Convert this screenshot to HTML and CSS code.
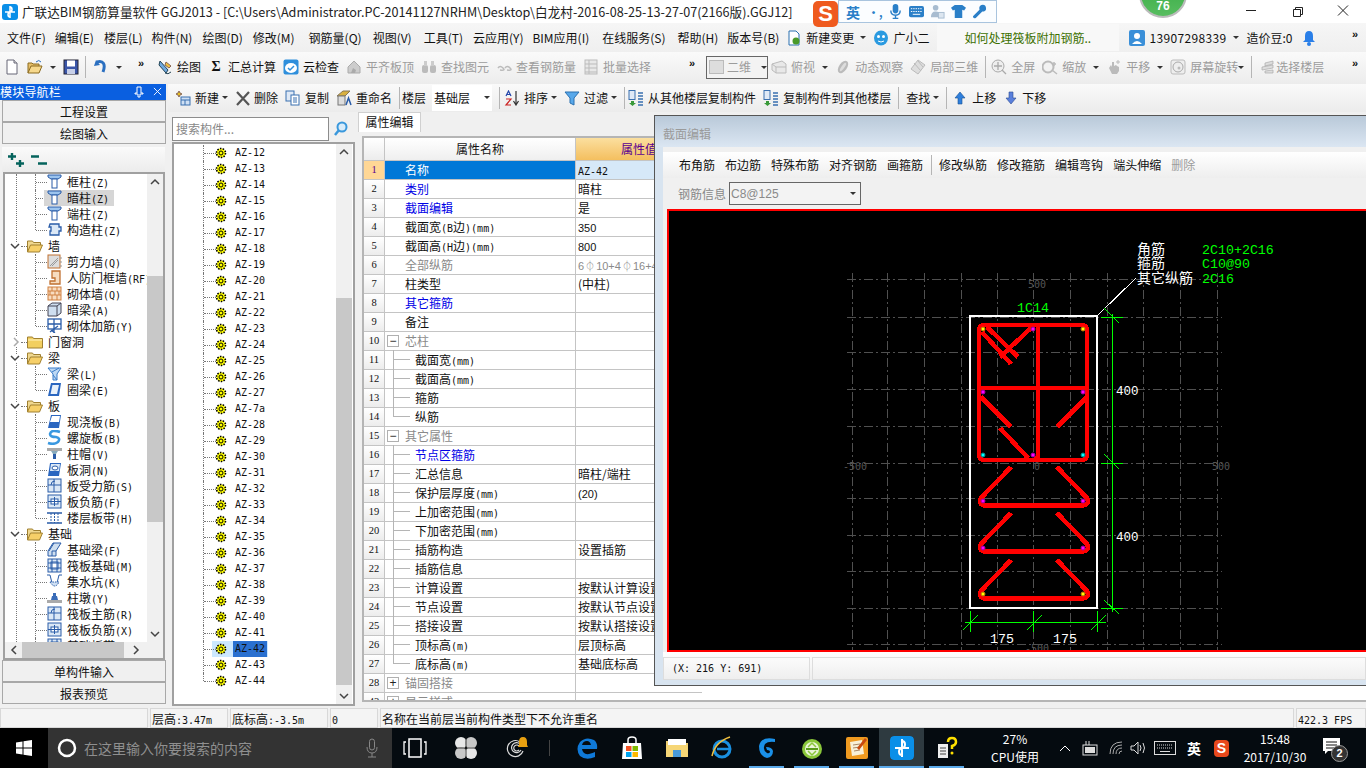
FILE: index.html
```html
<!DOCTYPE html>
<html lang="zh-CN">
<head>
<meta charset="utf-8">
<title>广联达BIM钢筋算量软件 GGJ2013</title>
<link rel="stylesheet" href="styles.css">
</head>
<body>
<svg class="defs" width="0" height="0">
<defs>
<symbol id="doc" viewBox="0 0 16 16"><path d="M3 1h7l3 3v11H3z" fill="#fff" stroke="#667"/><path d="M10 1v3h3" fill="#ddd" stroke="#667"/></symbol>
<symbol id="open" viewBox="0 0 16 16"><path d="M1 14V4h4l1 1h6v2" fill="#e7c06a" stroke="#8a6a20"/><path d="M1 14l3-7h11l-3 7z" fill="#f6d88c" stroke="#8a6a20"/><path d="M9 3q3-3 5 0" fill="none" stroke="#2a6fc0"/></symbol>
<symbol id="save" viewBox="0 0 16 16"><rect x="1" y="1" width="14" height="14" fill="#3a55a8" stroke="#223"/><rect x="4" y="1.500" width="8" height="6" fill="#fff"/><rect x="4" y="10" width="8" height="5" fill="#c8d0e8"/></symbol>
<symbol id="undo" viewBox="0 0 16 16"><path d="M4 3c6-2 9 2 6 10" fill="none" stroke="#2a6fc0" stroke-width="3"/><path d="M1 7l6-1-4-5z" fill="#2a6fc0"/></symbol>
<symbol id="draw" viewBox="0 0 16 16"><path d="M3 2l8 9-2 3-7-8z" fill="#6fa8e0" stroke="#245"/><path d="M9 3l5 4-2 2-4-3z" fill="#f0c040" stroke="#865"/><path d="M8 14q3 2 6-1" fill="none" stroke="#245"/></symbol>
<symbol id="cloud" viewBox="0 0 16 16"><rect x="0.500" y="0.500" width="15" height="15" rx="2" fill="#2f8fdc"/><ellipse cx="8" cy="9" rx="6" ry="5" fill="#fff"/><path d="M5 9l2 2 4-4" fill="none" stroke="#2f8fdc" stroke-width="1.500"/></symbol>
<symbol id="g1" viewBox="0 0 16 16"><path d="M2 14V8l6-6 6 6v6z" fill="#ccc" stroke="#aaa"/><path d="M5 14l2-5 3 2-1 3z" fill="#aaa"/></symbol>
<symbol id="g2" viewBox="0 0 16 16"><rect x="1" y="6" width="6" height="8" rx="2" fill="#bbb"/><rect x="9" y="6" width="6" height="8" rx="2" fill="#bbb"/><rect x="3" y="2" width="3" height="5" fill="#ccc"/><rect x="10" y="2" width="3" height="5" fill="#ccc"/></symbol>
<symbol id="g3" viewBox="0 0 16 16"><path d="M2 9q2-3 5 0t-3 2m5-2q2-3 5 0t-3 2" fill="none" stroke="#bbb" stroke-width="1.500"/></symbol>
<symbol id="g4" viewBox="0 0 16 16"><rect x="2" y="1" width="12" height="14" fill="#e8e8e8" stroke="#bbb"/><path d="M2 5h12M2 9h12M2 13h12M6 1v14" stroke="#bbb"/></symbol>
<symbol id="g5" viewBox="0 0 16 16"><path d="M1 5l10-3 4 3v9H5L1 11z" fill="#e8e8e8" stroke="#bbb"/><path d="M1 5l4 3h10M5 8v6" stroke="#bbb" fill="none"/></symbol>
<symbol id="g6" viewBox="0 0 16 16"><ellipse cx="8" cy="8" rx="4" ry="7" fill="#bbb" transform="rotate(35 8 8)"/><ellipse cx="8" cy="8" rx="1.500" ry="5" fill="#ddd" transform="rotate(35 8 8)"/></symbol>
<symbol id="g7" viewBox="0 0 16 16"><path d="M8 1l7 5-7 9-7-5z" fill="#ddd" stroke="#bbb"/><path d="M4 4l7 8M8 2l5 6" stroke="#bbb"/></symbol>
<symbol id="g8" viewBox="0 0 16 16"><circle cx="7" cy="7" r="6" fill="#eee" stroke="#aaa"/><path d="M7 3v8M3 7h8M11 11l4 4" stroke="#aaa" stroke-width="1.300"/></symbol>
<symbol id="g9" viewBox="0 0 16 16"><circle cx="6" cy="8" r="5.500" fill="#f2f2f2" stroke="#bbb" stroke-width="2"/><path d="M10 11l5 4M12 3v4M10 5h4" stroke="#bbb" stroke-width="1.500"/></symbol>
<symbol id="g10" viewBox="0 0 16 16"><path d="M3 9l2-3 1 2V3h2v4l2-1 1 1 2 1v4l-2 3H6z" fill="#bbb"/><path d="M12 1v4M10 3h4" stroke="#bbb"/></symbol>
<symbol id="g11" viewBox="0 0 16 16"><rect x="1" y="1" width="14" height="14" rx="2" fill="#eee" stroke="#bbb"/><circle cx="8" cy="8" r="5" fill="none" stroke="#aaa"/><circle cx="9" cy="9" r="1.500" fill="#bbb"/></symbol>
<symbol id="g12" viewBox="0 0 16 16"><path d="M6 4l8-2v3l-8 2zM3 8l11-2v3L3 11zM6 12l8-1v3H6z" fill="#ddd" stroke="#aaa" stroke-width=".7"/></symbol>
<symbol id="new" viewBox="0 0 16 16"><path d="M4 1l1 2 2 1-2 1-1 2-1-2-2-1 2-1z" fill="#e8c020" stroke="#865"/><rect x="6" y="7" width="9" height="8" fill="#cfe0f4" stroke="#3a70b0"/><path d="M6 10h9M10 10v5" stroke="#3a70b0"/></symbol>
<symbol id="del" viewBox="0 0 14 16"><path d="M1 2l12 13M13 2L1 15" stroke="#555" stroke-width="2.200"/></symbol>
<symbol id="copy" viewBox="0 0 16 16"><rect x="1" y="1" width="8" height="10" fill="#dfe9f6" stroke="#3a70b0"/><rect x="6" y="5" width="8" height="10" fill="#fff" stroke="#3a70b0"/><path d="M8 8h4M8 10h4M8 12h4" stroke="#3a70b0"/></symbol>
<symbol id="ren" viewBox="0 0 16 16"><path d="M1 6l6-5h7l-5 5z" fill="#d8b040" stroke="#875"/><rect x="2" y="6" width="7" height="9" fill="#ddd" stroke="#777"/><path d="M10 15l2.500-7 2.500 7" fill="none" stroke="#2a5ca8" stroke-width="1.500"/></symbol>
<symbol id="sort" viewBox="0 0 16 16"><path d="M2 6l2.500-5L7 6M2.800 4.500h3.400" fill="none" stroke="#24a" stroke-width="1.200"/><path d="M2 9h5l-5 6h5" fill="none" stroke="#c22" stroke-width="1.200"/><path d="M12 1v13M9.500 11l2.500 4 2.500-4" fill="none" stroke="#333" stroke-width="1.200"/></symbol>
<symbol id="filter" viewBox="0 0 16 16"><path d="M1 2h14l-5 6v7l-4-2V8z" fill="#58a8ea" stroke="#2a70b0"/></symbol>
<symbol id="cfrom" viewBox="0 0 16 16"><rect x="1" y="0.500" width="6" height="9" fill="#dfe9f6" stroke="#3a70b0"/><path d="M3 11h3v2h2l-3.500 3L1 13h2z" fill="#3a9a3a"/><path d="M10 3h5M10 6h5M10 9h5M10 12h5M10 15h5" stroke="#3a70b0" stroke-width="1.500"/></symbol>
<symbol id="up" viewBox="0 0 12 16"><path d="M6 2l5 6H8v6H4V8H1z" fill="#2f7fdc" stroke="#1a5090" stroke-width=".6"/></symbol>
<symbol id="down" viewBox="0 0 12 16"><path d="M6 14l5-6H8V2H4v6H1z" fill="#5a80dc" stroke="#2a4a90" stroke-width=".6"/></symbol>
<symbol id="search" viewBox="0 0 16 16"><circle cx="9" cy="6" r="4.500" fill="#d8ecfa" stroke="#3a98dc" stroke-width="2"/><path d="M6 9l-4 5" stroke="#3a98dc" stroke-width="2.500"/></symbol>
<symbol id="gear" viewBox="0 0 12 12"><circle cx="6" cy="6" r="4.500" fill="#ff0" stroke="#000" stroke-width="1.600" stroke-dasharray="1.500 1.300"/><circle cx="6" cy="6" r="2" fill="#ff0" stroke="#000"/></symbol>
<symbol id="fopen" viewBox="0 0 16 14"><path d="M0.500 13V2h5l1 1.500h7V6" fill="#f0d890" stroke="#a08030"/><path d="M0.500 13l3-7h12l-3 7z" fill="#f6cf68" stroke="#a08030"/></symbol>
<symbol id="fclosed" viewBox="0 0 16 14"><path d="M0.500 13V2h5l1 1.500h9V13z" fill="#f2cf60" stroke="#a08030"/><path d="M1 5h14" stroke="#fff3c0"/></symbol>
<symbol id="col" viewBox="0 0 15 15"><path d="M1 1h13v2l-3 2H4L1 3z" fill="#9cc4ee" stroke="#2a5ca8"/><rect x="5" y="5" width="5" height="9" fill="#fff" stroke="#2a5ca8"/></symbol>
<symbol id="gz" viewBox="0 0 15 15"><path d="M3 2h9v3h2v4h-2v4H3V9h1V5H2z" fill="#dbe8f6" stroke="#2a5ca8" stroke-width="1.300"/></symbol>
<symbol id="shear" viewBox="0 0 15 15"><rect x="1" y="1" width="12" height="13" fill="#ddd" stroke="#c07030"/><path d="M3 12l8-8M5 12l6-6M13 4h2M13 8h2M13 12h2" stroke="#999"/></symbol>
<symbol id="rf" viewBox="0 0 15 15"><path d="M5 1h8v13H3v-3h5V8H5z" fill="#f6dcc0" stroke="#c07030" stroke-width="1.300"/></symbol>
<symbol id="brick" viewBox="0 0 15 15"><rect x="1" y="1" width="13" height="13" fill="#f8dcc0" stroke="#d08040"/><path d="M1 5h13M1 9h13M5 1v4M10 1v4M3 5v4M8 5v4M12 5v4M5 9v5M10 9v5" stroke="#d08040"/></symbol>
<symbol id="beam" viewBox="0 0 15 15"><path d="M1 4l4-3h9v10l-4 3H1z" fill="#cfdff0" stroke="#445"/><path d="M1 4h9v10M10 4l4-3" fill="none" stroke="#445"/></symbol>
<symbol id="rein" viewBox="0 0 15 15"><rect x="1" y="1" width="13" height="10" fill="#fff" stroke="#2a5ca8" stroke-width="1.300"/><path d="M7 1v14M1 6h13M3 14l8-6M4 12l4 3" stroke="#2a5ca8" stroke-width="1.300" fill="none"/></symbol>
<symbol id="liang" viewBox="0 0 15 15"><path d="M1 2h13L10 8v6H6V8z" fill="#bcd8f4" stroke="#3a7cc8"/><path d="M5 6l7-4M6 9l4 5" stroke="#3a7cc8"/></symbol>
<symbol id="ring" viewBox="0 0 15 15"><path d="M4 1h10l-2 13H1z" fill="#2a66c0"/><path d="M5.500 3h6.500L10 12H3.500z" fill="#e8f1fb"/></symbol>
<symbol id="slab" viewBox="0 0 15 15"><path d="M4 1h10l-2 13H1z" fill="#2a66c0"/><path d="M5 2h8l-1 6H3z" fill="#fff"/></symbol>
<symbol id="spiral" viewBox="0 0 15 15"><path d="M13 2Q4-1 3 4q0 3 6 3 5 1 2 5-4 3-10 1" fill="none" stroke="#3a98e0" stroke-width="2.600"/></symbol>
<symbol id="cap" viewBox="0 0 15 15"><path d="M0 2h15v3H0z" fill="#aaa"/><path d="M4 5h7l-2 3H6z" fill="#8ab"/><rect x="6" y="8" width="3" height="5" fill="#2a5ca8"/></symbol>
<symbol id="hole" viewBox="0 0 15 15"><path d="M3 1h11l-2 13H1z" fill="#2a66c0"/><path d="M4 2h9l-1 7H3z" fill="#dbe8f6"/><ellipse cx="8" cy="6" rx="3" ry="2" fill="#fff" stroke="#2a5ca8"/></symbol>
<symbol id="reb" viewBox="0 0 15 15"><rect x="1" y="1" width="13" height="13" fill="#dbe8f6" stroke="#2a5ca8"/><path d="M1 7h13M7 1v13" stroke="#2a5ca8"/><path d="M4 7q0-4 4-4" fill="none" stroke="#2a5ca8"/></symbol>
<symbol id="neg" viewBox="0 0 15 15"><rect x="1" y="1" width="13" height="13" fill="#dbe8f6" stroke="#2a5ca8"/><rect x="4" y="5" width="7" height="5" fill="#fff" stroke="#2a5ca8"/><path d="M7.500 3v9M1 7.500h13" stroke="#2a5ca8"/></symbol>
<symbol id="band" viewBox="0 0 15 15"><path d="M0 3h15M0 13h15" stroke="#2a5ca8" stroke-width="1.300"/><path d="M4 3v10M7.500 3v10M11 3v10" stroke="#2a5ca8" stroke-dasharray="2 1"/></symbol>
<symbol id="jl" viewBox="0 0 15 15"><path d="M1 14V9l5-8h8L9 9v5z" fill="#cfdff0" stroke="#2a5ca8"/><path d="M5 14V9h4M2 9l5-8" fill="none" stroke="#2a5ca8"/></symbol>
<symbol id="fb" viewBox="0 0 15 15"><rect x="1" y="1" width="13" height="13" fill="#dbe8f6" stroke="#2a5ca8"/><rect x="4" y="4" width="7" height="7" fill="#fff" stroke="#2a5ca8"/><path d="M1 5h13M1 10h13M5 1v13M10 1v13" stroke="#2a5ca8"/></symbol>
<symbol id="pit" viewBox="0 0 15 15"><path d="M0 1h3l2 8h5l2-8h3" fill="none" stroke="#2a5ca8"/><path d="M3 8q5 8 9 0z" fill="#cfe0f4" stroke="#2a5ca8" stroke-dasharray="1.500 1"/></symbol>
<symbol id="pier" viewBox="0 0 15 15"><path d="M5 6h5l1 4H4z" fill="#3a6cb8"/><rect x="6" y="3" width="3" height="3" fill="#3a6cb8"/><rect x="0" y="10" width="15" height="3" fill="#aaa"/></symbol>
<symbol id="chev-d" viewBox="0 0 10 8"><path d="M1 2l4 4 4-4" fill="none" stroke="#444" stroke-width="1.500"/></symbol>
<symbol id="chev-u" viewBox="0 0 10 8"><path d="M1 6l4-4 4 4" fill="none" stroke="#444" stroke-width="1.500"/></symbol>
<symbol id="chev-r" viewBox="0 0 8 10"><path d="M2 1l4 4-4 4" fill="none" stroke="#aaa" stroke-width="1.500"/></symbol>
<symbol id="chev-r2" viewBox="0 0 8 10"><path d="M2 1l4 4-4 4" fill="none" stroke="#444" stroke-width="1.500"/></symbol>
<symbol id="chev-l" viewBox="0 0 8 10"><path d="M6 1L2 5l4 4" fill="none" stroke="#444" stroke-width="1.500"/></symbol>
</defs>
</svg>

<header class="titlebar">
  <svg class="appicon" viewBox="0 0 16 16"><rect width="16" height="16" rx="3" fill="#0a8fe8"/><path d="M8 2v12M3 8h4q3 0 3-2.500T8 3M13 8H9q-3 0-3 2.500T8 13" fill="none" stroke="#fff" stroke-width="1.500"/></svg>
  <span class="title-text">广联达BIM钢筋算量软件 GGJ2013 - [C:\Users\Administrator.PC-20141127NRHM\Desktop\白龙村-2016-08-25-13-27-07(2166版).GGJ12]</span>
  <div class="winbtns">
    <svg class="wb" viewBox="0 0 46 23"><path d="M18 10.500h10" stroke="#222"/></svg>
    <svg class="wb" viewBox="0 0 46 23"><path d="M19.500 9.500h7v7h-7zM21.500 9.500v-2h7v7h-2" fill="none" stroke="#222"/></svg>
    <svg class="wb" viewBox="0 0 46 23"><path d="M18 5.500l10 10M28 5.500l-10 10" stroke="#222"/></svg>
  </div>
</header>

<nav class="menubar">
  <span>文件(F)</span><span class="mm1">编辑(E)</span><span>楼层(L)</span><span class="mm1">构件(N)</span><span>绘图(D)</span><span>修改(M)</span><span class="mp4">钢筋量(Q)</span><span class="mp1">视图(V)</span><span class="mp2">工具(T)</span><span>云应用(Y)</span><span class="mm1">BIM应用(I)</span><span class="mp3">在线服务(S)</span><span class="mp2">帮助(H)</span><span class="mm1">版本号(B)</span>
  <svg class="mi16 mm3" viewBox="0 0 16 16"><path d="M3 1h7l3 3v11H3z" fill="#fff" stroke="#2a70b0"/><circle cx="10" cy="11" r="3.500" fill="#4a9a2a"/></svg>
  <span class="tight-l">新建变更</span><i class="caret mc"></i>
  <svg class="mi16 mm3" viewBox="0 0 16 16"><ellipse cx="8" cy="8" rx="7" ry="7.500" fill="#2a9ae0"/><circle cx="5.500" cy="6.500" r="1.500" fill="#fff"/><circle cx="10.500" cy="6.500" r="1.500" fill="#fff"/><path d="M5 11q3 2 6 0" fill="none" stroke="#fff"/></svg>
  <span class="tight-l">广小二</span>
  <div class="ask">如何处理筏板附加钢筋..</div>
  <svg class="mi16" viewBox="0 0 16 16"><rect width="16" height="16" rx="2" fill="#3a8fd8"/><circle cx="8" cy="6" r="3" fill="#fff"/><path d="M3 14q5-6 10 0z" fill="#fff"/></svg>
  <span class="tight-l phone">13907298339</span><i class="caret mc"></i>
  <span class="mm2">造价豆:0</span>
  <svg class="bell" viewBox="0 0 14 16"><path d="M7 1q4 0 4 5v4l2 2H1l2-2V6q0-5 4-5z" fill="#2a7fe8"/><circle cx="7" cy="14" r="2" fill="#2a7fe8"/></svg>
  <span class="more endmore">»</span>
</nav>

<div class="toolbar">
  <svg class="ic"><use href="#doc"/></svg>
  <svg class="ic"><use href="#open"/></svg><i class="caret"></i>
  <svg class="ic"><use href="#save"/></svg>
  <i class="sep tl"></i>
  <svg class="ic"><use href="#undo"/></svg><i class="caret"></i>
  <span class="more after-undo">»</span>
  <div class="t after-more"><svg class="ic"><use href="#draw"/></svg>绘图</div>
  <div class="t"><b class="sig">Σ</b>汇总计算</div>
  <div class="t"><svg class="ic"><use href="#cloud"/></svg>云检查</div>
  <div class="t off"><svg class="ic"><use href="#g1"/></svg>平齐板顶</div>
  <div class="t off"><svg class="ic"><use href="#g2"/></svg>查找图元</div>
  <div class="t off"><svg class="ic"><use href="#g3"/></svg>查看钢筋量</div>
  <div class="t off"><svg class="ic"><use href="#g4"/></svg>批量选择</div>
  <span class="more after-batch">»</span>
  <div class="combo2d off"><i class="sq"></i>二维<i class="caret cr"></i></div>
  <div class="t off pull"><svg class="ic"><use href="#g5"/></svg>俯视</div><i class="caret"></i>
  <div class="t off"><svg class="ic"><use href="#g6"/></svg>动态观察</div>
  <div class="t off"><svg class="ic"><use href="#g7"/></svg>局部三维</div>
  <i class="sep"></i>
  <div class="t off tl2"><svg class="ic"><use href="#g8"/></svg>全屏</div>
  <div class="t off"><svg class="ic"><use href="#g9"/></svg>缩放</div><i class="caret"></i>
  <div class="t off"><svg class="ic"><use href="#g10"/></svg>平移</div><i class="caret"></i>
  <div class="t off"><svg class="ic"><use href="#g11"/></svg>屏幕旋转</div><i class="caret tc"></i>
  <i class="sep"></i>
  <div class="t off nogap"><svg class="ic"><use href="#g12"/></svg>选择楼层</div>
  <span class="more endmore">»</span>
</div>

<main class="workspace">
  <aside class="nav">
    <div class="nav-head"><span>模块导航栏</span>
      <svg class="pin" viewBox="0 0 10 12"><path d="M3 1h4v6h2v1H6v3H4V8H1V7h2z" fill="none" stroke="#fff"/></svg>
      <svg class="xx" viewBox="0 0 10 10"><path d="M1 1l8 8M9 1l-8 8" stroke="#fff"/></svg>
    </div>
    <div class="nav-btn">工程设置</div>
    <div class="nav-btn">绘图输入</div>
    <div class="nav-tools">
      <svg class="pm" viewBox="0 0 20 16"><path d="M4 4.500h8M8 1v7M12 11.500h8M16 8v7" stroke="#05635c" stroke-width="2.400"/></svg>
      <svg class="pm" viewBox="0 0 20 16"><path d="M2 4.500h8M9 11.500h9" stroke="#05635c" stroke-width="2.400"/></svg>
    </div>
    <div class="nav-box">
      <div class="nav-upper">
        <div class="nav-list">
          <div class="ni"><svg class="i15"><use href="#col"/></svg>框柱<span class="m">(Z)</span></div>
          <div class="ni"><span class="selb"><svg class="i15"><use href="#col"/></svg>暗柱<span class="m">(Z)</span></span></div>
          <div class="ni"><svg class="i15"><use href="#col"/></svg>端柱<span class="m">(Z)</span></div>
          <div class="ni last"><svg class="i15"><use href="#gz"/></svg>构造柱<span class="m">(Z)</span></div>
          <div class="nf"><svg class="chev"><use href="#chev-d"/></svg><svg class="fold"><use href="#fopen"/></svg>墙</div>
          <div class="ni"><svg class="i15"><use href="#shear"/></svg>剪力墙<span class="m">(Q)</span></div>
          <div class="ni"><svg class="i15"><use href="#rf"/></svg>人防门框墙<span class="m">(RF)</span></div>
          <div class="ni"><svg class="i15"><use href="#brick"/></svg>砌体墙<span class="m">(Q)</span></div>
          <div class="ni"><svg class="i15"><use href="#beam"/></svg>暗梁<span class="m">(A)</span></div>
          <div class="ni last"><svg class="i15"><use href="#rein"/></svg>砌体加筋<span class="m">(Y)</span></div>
          <div class="nf"><svg class="chev-side"><use href="#chev-r"/></svg><svg class="fold"><use href="#fclosed"/></svg>门窗洞</div>
          <div class="nf"><svg class="chev"><use href="#chev-d"/></svg><svg class="fold"><use href="#fopen"/></svg>梁</div>
          <div class="ni"><svg class="i15"><use href="#liang"/></svg>梁<span class="m">(L)</span></div>
          <div class="ni last"><svg class="i15"><use href="#ring"/></svg>圈梁<span class="m">(E)</span></div>
          <div class="nf"><svg class="chev"><use href="#chev-d"/></svg><svg class="fold"><use href="#fopen"/></svg>板</div>
          <div class="ni"><svg class="i15"><use href="#slab"/></svg>现浇板<span class="m">(B)</span></div>
          <div class="ni"><svg class="i15"><use href="#spiral"/></svg>螺旋板<span class="m">(B)</span></div>
          <div class="ni"><svg class="i15"><use href="#cap"/></svg>柱帽<span class="m">(V)</span></div>
          <div class="ni"><svg class="i15"><use href="#hole"/></svg>板洞<span class="m">(N)</span></div>
          <div class="ni"><svg class="i15"><use href="#reb"/></svg>板受力筋<span class="m">(S)</span></div>
          <div class="ni"><svg class="i15"><use href="#neg"/></svg>板负筋<span class="m">(F)</span></div>
          <div class="ni last"><svg class="i15"><use href="#band"/></svg>楼层板带<span class="m">(H)</span></div>
          <div class="nf"><svg class="chev"><use href="#chev-d"/></svg><svg class="fold"><use href="#fopen"/></svg>基础</div>
          <div class="ni"><svg class="i15"><use href="#jl"/></svg>基础梁<span class="m">(F)</span></div>
          <div class="ni"><svg class="i15"><use href="#fb"/></svg>筏板基础<span class="m">(M)</span></div>
          <div class="ni"><svg class="i15"><use href="#pit"/></svg>集水坑<span class="m">(K)</span></div>
          <div class="ni"><svg class="i15"><use href="#pier"/></svg>柱墩<span class="m">(Y)</span></div>
          <div class="ni"><svg class="i15"><use href="#reb"/></svg>筏板主筋<span class="m">(R)</span></div>
          <div class="ni"><svg class="i15"><use href="#neg"/></svg>筏板负筋<span class="m">(X)</span></div>
          <div class="ni"><svg class="i15"><use href="#fb"/></svg>基础板带<span class="m">(H)</span></div>
        </div>
        <div class="vbar nav-v">
          <svg class="arr"><use href="#chev-u"/></svg>
          <div class="thumb"></div>
          <svg class="arr arr-end"><use href="#chev-d"/></svg>
        </div>
      </div>
      <div class="hbar">
        <svg class="harr"><use href="#chev-l"/></svg>
        <div class="hthumb"></div>
        <svg class="harr harr-end"><use href="#chev-r2"/></svg>
      </div>
    </div>
    <div class="nav-btn">单构件输入</div>
    <div class="nav-btn">报表预览</div>
  </aside>

  <section class="right">
    <div class="toolbar2">
      <div class="t"><svg class="ic"><use href="#new"/></svg>新建</div><i class="caret c2"></i>
      <div class="t x8"><svg class="ic14"><use href="#del"/></svg>删除</div>
      <div class="t"><svg class="ic"><use href="#copy"/></svg>复制</div>
      <div class="t"><svg class="ic"><use href="#ren"/></svg>重命名</div>
      <i class="sep"></i>
      <span class="lab">楼层</span>
      <div class="floor">基础层<i class="caret"></i></div>
      <i class="sep"></i>
      <div class="t lab2"><svg class="ic"><use href="#sort"/></svg>排序</div><i class="caret c2"></i>
      <div class="t"><svg class="ic"><use href="#filter"/></svg>过滤</div><i class="caret c2"></i>
      <i class="sep"></i>
      <div class="t lab1"><svg class="ic"><use href="#cfrom"/></svg>从其他楼层复制构件</div>
      <div class="t"><svg class="ic"><use href="#cfrom"/></svg>复制构件到其他楼层</div>
      <i class="sep"></i>
      <span>查找</span><i class="caret c2"></i>
      <i class="sep"></i>
      <div class="t g6"><svg class="ic12"><use href="#up"/></svg>上移</div>
      <div class="t g5 x3"><svg class="ic12"><use href="#down"/></svg>下移</div>
    </div>
    <div class="panes">
      <div class="tree-pane">
        <div class="search-row">
          <div class="search-input">搜索构件...</div>
          <svg class="search-ic"><use href="#search"/></svg>
        </div>
        <div class="tree-box">
          <div class="tree-list">
            <div class="tr"><svg class="gear"><use href="#gear"/></svg>AZ-12</div>
            <div class="tr"><svg class="gear"><use href="#gear"/></svg>AZ-13</div>
            <div class="tr"><svg class="gear"><use href="#gear"/></svg>AZ-14</div>
            <div class="tr"><svg class="gear"><use href="#gear"/></svg>AZ-15</div>
            <div class="tr"><svg class="gear"><use href="#gear"/></svg>AZ-16</div>
            <div class="tr"><svg class="gear"><use href="#gear"/></svg>AZ-17</div>
            <div class="tr"><svg class="gear"><use href="#gear"/></svg>AZ-18</div>
            <div class="tr"><svg class="gear"><use href="#gear"/></svg>AZ-19</div>
            <div class="tr"><svg class="gear"><use href="#gear"/></svg>AZ-20</div>
            <div class="tr"><svg class="gear"><use href="#gear"/></svg>AZ-21</div>
            <div class="tr"><svg class="gear"><use href="#gear"/></svg>AZ-22</div>
            <div class="tr"><svg class="gear"><use href="#gear"/></svg>AZ-23</div>
            <div class="tr"><svg class="gear"><use href="#gear"/></svg>AZ-24</div>
            <div class="tr"><svg class="gear"><use href="#gear"/></svg>AZ-25</div>
            <div class="tr"><svg class="gear"><use href="#gear"/></svg>AZ-26</div>
            <div class="tr"><svg class="gear"><use href="#gear"/></svg>AZ-27</div>
            <div class="tr"><svg class="gear"><use href="#gear"/></svg>AZ-7a</div>
            <div class="tr"><svg class="gear"><use href="#gear"/></svg>AZ-28</div>
            <div class="tr"><svg class="gear"><use href="#gear"/></svg>AZ-29</div>
            <div class="tr"><svg class="gear"><use href="#gear"/></svg>AZ-30</div>
            <div class="tr"><svg class="gear"><use href="#gear"/></svg>AZ-31</div>
            <div class="tr"><svg class="gear"><use href="#gear"/></svg>AZ-32</div>
            <div class="tr"><svg class="gear"><use href="#gear"/></svg>AZ-33</div>
            <div class="tr"><svg class="gear"><use href="#gear"/></svg>AZ-34</div>
            <div class="tr"><svg class="gear"><use href="#gear"/></svg>AZ-35</div>
            <div class="tr"><svg class="gear"><use href="#gear"/></svg>AZ-36</div>
            <div class="tr"><svg class="gear"><use href="#gear"/></svg>AZ-37</div>
            <div class="tr"><svg class="gear"><use href="#gear"/></svg>AZ-38</div>
            <div class="tr"><svg class="gear"><use href="#gear"/></svg>AZ-39</div>
            <div class="tr"><svg class="gear"><use href="#gear"/></svg>AZ-40</div>
            <div class="tr"><svg class="gear"><use href="#gear"/></svg>AZ-41</div>
            <div class="tr cur"><svg class="gear"><use href="#gear"/></svg><span class="curtext">AZ-42</span></div>
            <div class="tr"><svg class="gear"><use href="#gear"/></svg>AZ-43</div>
            <div class="tr last"><svg class="gear"><use href="#gear"/></svg>AZ-44</div>
          </div>
          <div class="vbar tree-v">
            <svg class="arr"><use href="#chev-u"/></svg>
            <div class="thumb"></div>
            <svg class="arr arr-end"><use href="#chev-d"/></svg>
          </div>
        </div>
      </div>

      <div class="props-pane">
        <div class="tabbar"><div class="tab">属性编辑</div></div>
        <div class="grid">
          <div class="row head"><div class="num"></div><div class="nm">属性名称</div><div class="val">属性值</div></div>
          <div class="row sel"><div class="num">1</div><div class="nm">名称</div><div class="val"><span class="m">AZ-42</span></div></div>
          <div class="row"><div class="num">2</div><div class="nm blue">类别</div><div class="val">暗柱</div></div>
          <div class="row"><div class="num">3</div><div class="nm blue">截面编辑</div><div class="val">是</div></div>
          <div class="row"><div class="num">4</div><div class="nm">截面宽<span class="m">(B</span>边<span class="m">)(mm)</span></div><div class="val"><span class="n">350</span></div></div>
          <div class="row"><div class="num">5</div><div class="nm">截面高<span class="m">(H</span>边<span class="m">)(mm)</span></div><div class="val"><span class="n">800</span></div></div>
          <div class="row"><div class="num">6</div><div class="nm gray">全部纵筋</div><div class="val gray"><span class="n">6</span><span class="rebar">⏀</span><span class="n">10+4</span><span class="rebar">⏀</span><span class="n">16+4</span></div></div>
          <div class="row"><div class="num">7</div><div class="nm">柱类型</div><div class="val">(中柱)</div></div>
          <div class="row"><div class="num">8</div><div class="nm blue">其它箍筋</div><div class="val"></div></div>
          <div class="row"><div class="num">9</div><div class="nm">备注</div><div class="val"></div></div>
          <div class="row"><div class="num">10</div><div class="nm grp gray"><i class="bx">−</i>芯柱</div><div class="val"></div></div>
          <div class="row"><div class="num">11</div><div class="nm sub">截面宽<span class="m">(mm)</span></div><div class="val"></div></div>
          <div class="row"><div class="num">12</div><div class="nm sub">截面高<span class="m">(mm)</span></div><div class="val"></div></div>
          <div class="row"><div class="num">13</div><div class="nm sub">箍筋</div><div class="val"></div></div>
          <div class="row"><div class="num">14</div><div class="nm sub end">纵筋</div><div class="val"></div></div>
          <div class="row"><div class="num">15</div><div class="nm grp gray"><i class="bx">−</i>其它属性</div><div class="val"></div></div>
          <div class="row"><div class="num">16</div><div class="nm sub blue">节点区箍筋</div><div class="val"></div></div>
          <div class="row"><div class="num">17</div><div class="nm sub">汇总信息</div><div class="val">暗柱/端柱</div></div>
          <div class="row"><div class="num">18</div><div class="nm sub">保护层厚度<span class="m">(mm)</span></div><div class="val"><span class="n">(20)</span></div></div>
          <div class="row"><div class="num">19</div><div class="nm sub">上加密范围<span class="m">(mm)</span></div><div class="val"></div></div>
          <div class="row"><div class="num">20</div><div class="nm sub">下加密范围<span class="m">(mm)</span></div><div class="val"></div></div>
          <div class="row"><div class="num">21</div><div class="nm sub">插筋构造</div><div class="val">设置插筋</div></div>
          <div class="row"><div class="num">22</div><div class="nm sub">插筋信息</div><div class="val"></div></div>
          <div class="row"><div class="num">23</div><div class="nm sub">计算设置</div><div class="val">按默认计算设置</div></div>
          <div class="row"><div class="num">24</div><div class="nm sub">节点设置</div><div class="val">按默认节点设置</div></div>
          <div class="row"><div class="num">25</div><div class="nm sub">搭接设置</div><div class="val">按默认搭接设置</div></div>
          <div class="row"><div class="num">26</div><div class="nm sub">顶标高<span class="m">(m)</span></div><div class="val">层顶标高</div></div>
          <div class="row"><div class="num">27</div><div class="nm sub end">底标高<span class="m">(m)</span></div><div class="val">基础底标高</div></div>
          <div class="row"><div class="num">28</div><div class="nm grp gray"><i class="bx">+</i>锚固搭接</div><div class="val"></div></div>
          <div class="row"><div class="num">43</div><div class="nm grp gray"><i class="bx">+</i>显示样式</div><div class="val"></div></div>
        </div>
      </div>
    </div>
  </section>
</main>

<footer class="statusbar">
  <div class="sc s1"></div>
  <div class="sc s2">层高<span class="m">:3.47m</span></div>
  <div class="sc s3">底标高<span class="m">:-3.5m</span></div>
  <div class="sc s4"><span class="m">0</span></div>
  <div class="sc s5">名称在当前层当前构件类型下不允许重名</div>
  <div class="sc s6"><span class="m">422.3 FPS</span></div>
</footer>

<div class="taskbar">
  <div class="start"><svg class="winlogo" viewBox="0 0 16 16"><path d="M0 2.500l6.500-1v6H0zM7.500 1.300L16 0v7.500H7.500zM0 8.500h6.500v6l-6.500-1zM7.500 8.500H16V16l-8.500-1.300z" fill="#fff"/></svg></div>
  <div class="tsearch">
    <svg class="cortana" viewBox="0 0 20 20"><circle cx="10" cy="10" r="8" fill="none" stroke="#fff" stroke-width="2.500"/></svg>
    <span>在这里输入你要搜索的内容</span>
    <svg class="mic" viewBox="0 0 12 20"><rect x="3.500" y="1" width="5" height="11" rx="2.500" fill="none" stroke="#888"/><path d="M1 9q0 6 5 6t5-6M6 15v4M2 19h8" fill="none" stroke="#888"/></svg>
  </div>
  <div class="tk"><svg class="tki" viewBox="0 0 24 24"><rect x="6" y="3" width="12" height="18" fill="none" stroke="#fff" stroke-width="1.500"/><path d="M3 6H1v12h2M21 6h2v12h-2" fill="none" stroke="#fff" stroke-width="1.300"/></svg></div>
  <div class="tk tk6"><svg class="tki" viewBox="0 0 24 24"><circle cx="7" cy="7" r="6" fill="#e8e8e8"/><circle cx="17" cy="7" r="6" fill="#c8c8c8"/><circle cx="7" cy="17" r="6" fill="#c8c8c8"/><circle cx="17" cy="17" r="6" fill="#e8e8e8"/><path d="M12 1v22M1 12h22" stroke="#111" stroke-width=".8"/></svg></div>
  <div class="tk tk5"><svg class="tki" viewBox="0 0 24 24"><path d="M16 6a8 8 0 1 0 3 9M16 8a5 5 0 1 0 1 6M15 10a3 3 0 1 0 0 4" fill="none" stroke="#ddd" stroke-width="1.200"/><path d="M19 1q4 0 4 5v3l1 2H14l1-2V6q0-5 4-5z" fill="#e8a010"/></svg></div>
  <i class="tk-sep"></i>
  <div class="tk tk14"><svg class="tki" viewBox="0 0 24 24"><path d="M22 13H7q1 6 7 5 4-1 6-2v5q-9 4-15-1-5-7 0-14 6-6 14-2 4 3 3 9zM16 9q-1-4-4-4-4 0-5 4z" fill="#0f79d8"/></svg></div>
  <div class="tk"><svg class="tki" viewBox="0 0 24 24"><path d="M3 7h18l1 16H2z" fill="#fff"/><path d="M8 7V4q0-3 4-3t4 3v3" fill="none" stroke="#fff" stroke-width="1.500"/><rect x="6" y="10" width="5.500" height="5" fill="#f25022"/><rect x="12.500" y="10" width="5.500" height="5" fill="#7fba00"/><rect x="6" y="16" width="5.500" height="5" fill="#00a4ef"/><rect x="12.500" y="16" width="5.500" height="5" fill="#ffb900"/></svg></div>
  <div class="tk"><svg class="tki" viewBox="0 0 24 24"><path d="M1 5h8l2 2h12v14H1z" fill="#f0d070"/><path d="M3 3h18v6H3z" fill="#fff"/><path d="M1 9h22v12H1z" fill="#f6d676"/><rect x="8" y="14" width="8" height="7" fill="#4a9ad8"/></svg></div>
  <div class="tk"><svg class="tki" viewBox="0 0 24 24"><circle cx="12" cy="13" r="8" fill="none" stroke="#1a90e0" stroke-width="3"/><path d="M7 13h14" stroke="#1a90e0" stroke-width="2.500"/><path d="M2 20q3-14 18-19" fill="none" stroke="#f0c040" stroke-width="1.500"/></svg></div>
  <div class="tk run"><svg class="tki" viewBox="0 0 24 24"><path d="M20 3Q6 0 4 10q0 10 8 12 6-1 6-7-1-4-7-4l1 3q3 0 3 2-1 2-3 1-5-3-2-9 3-3 10-2z" fill="#1a90e8"/></svg></div>
  <div class="tk run"><svg class="tki" viewBox="0 0 24 24"><circle cx="12" cy="13" r="10" fill="#8ac63a"/><circle cx="12" cy="13" r="7" fill="#eaf4d8"/><path d="M6 13h12" stroke="#5a9a1a" stroke-width="2"/><path d="M8 11l4-4 4 4M8 15l4 4 4-4" fill="none" stroke="#8ac63a" stroke-width="1.500"/></svg></div>
  <div class="tk run"><svg class="tki" viewBox="0 0 24 24"><rect x="1" y="1" width="22" height="22" rx="2" fill="#ef9a20"/><path d="M5 6l12-2 2 14-12 2z" fill="#f8f0d8"/><path d="M8 9l7-1M8 12l7-1M9 15l6-1" stroke="#a86" /><path d="M20 2l2 2-8 10-2-2z" fill="#c84a10"/></svg></div>
  <div class="tk run active"><svg class="tki appbig" viewBox="0 0 24 24"><rect width="24" height="24" rx="4" fill="#0a8fe8"/><path d="M12 3v18M5 12h6q4 0 4-3.500T12 5M19 12h-6q-4 0-4 3.500t3 3.500" fill="none" stroke="#fff" stroke-width="2"/></svg></div>
  <div class="tk run"><svg class="tki" viewBox="0 0 24 24"><rect x="3" y="8" width="10" height="14" fill="#eee"/><path d="M5 12h6M5 15h6M5 18h6" stroke="#444"/><path d="M13 6q0-4 4-4t4 4q0 3-4 4v3" fill="none" stroke="#ffe000" stroke-width="2.500"/><circle cx="17" cy="17" r="1.500" fill="#ffe000"/></svg></div>
  <div class="cpu"><span>27%</span><span>CPU使用</span></div>
  <svg class="tray-up" viewBox="0 0 12 8"><path d="M1 7l5-5 5 5" fill="none" stroke="#fff"/></svg>
  <svg class="tray-bat" viewBox="0 0 18 16"><rect x="2" y="5" width="14" height="10" fill="none" stroke="#ddd"/><rect x="4" y="7" width="10" height="6" fill="#ddd"/><path d="M5 1v4M8 1v4" stroke="#ddd"/></svg>
  <svg class="tray-wifi" viewBox="0 0 14 14"><path d="M1 13q0-12 12-12M4 13q0-9 9-9M7 13q0-6 6-6M10 13q0-3 3-3" fill="none" stroke="#aaa"/></svg>
  <svg class="tray-vol" viewBox="0 0 16 14"><path d="M1 5h3l4-4v12L4 9H1z" fill="none" stroke="#ddd"/><path d="M10 4q2 3 0 6M13 2q3 5 0 10" fill="none" stroke="#ddd"/></svg>
  <svg class="tray-kbd" viewBox="0 0 22 14"><rect x="0.500" y="0.500" width="21" height="13" fill="none" stroke="#ddd"/><path d="M3 4h16M3 7h16" stroke="#ddd" stroke-dasharray="1 1"/><path d="M6 10.500h10" stroke="#ddd"/></svg>
  <span class="tray-cn">英</span>
  <span class="tray-s">S</span>
  <div class="clock"><span>15:48</span><span>2017/10/30</span></div>
  <div class="notif"><svg class="notif-ic" viewBox="0 0 17 17"><path d="M0 0h17v13H5l-3 3v-3H0z" fill="#fff"/><path d="M3 4h11M3 7h11M3 10h11" stroke="#111"/></svg><span class="badge">2</span></div>
</div>

<div class="sogou">
  <span class="s-logo">S</span>
  <div class="s-bar">
    <b class="s-cn">英</b>
    <b class="s-p">•,</b>
    <svg class="s-i" viewBox="0 0 14 16"><rect x="4" y="0" width="6" height="10" rx="3" fill="#2a7fc8"/><path d="M2 7q0 5 5 5t5-5M7 12v3M4 15.500h6" fill="none" stroke="#2a7fc8" stroke-width="1.500"/></svg>
    <svg class="s-i" viewBox="0 0 16 14"><rect x="0" y="1" width="16" height="12" rx="2" fill="#2a7fc8"/><path d="M2 4h12M2 7h12" stroke="#fff" stroke-dasharray="1.500 1"/><path d="M4 10h8" stroke="#fff"/></svg>
    <svg class="s-i" viewBox="0 0 16 16"><circle cx="6" cy="4" r="3" fill="#a8bcd0"/><path d="M1 14q0-6 5-6t4 6z" fill="#a8bcd0"/><rect x="9" y="9" width="6" height="6" fill="#dce6f0" stroke="#a8bcd0"/></svg>
    <svg class="s-i" viewBox="0 0 16 16"><path d="M4 1h8l4 3-2 3-2-1v9H4V6L2 7 0 4z" fill="#2a7fc8"/></svg>
    <svg class="s-i" viewBox="0 0 16 16"><path d="M10 1q5-1 5 4 0 3-4 3L4 15q-3 1-3-2l7-7q-1-4 2-5z" fill="#2a7fc8"/></svg>
  </div>
</div>

<div class="badge76">76</div>

<div class="dialog">
  <div class="dlg-title">截面编辑</div>
  <div class="dlg-body">
    <div class="dlg-bar1">
      <span>布角筋</span><span>布边筋</span><span>特殊布筋</span><span>对齐钢筋</span><span>画箍筋</span><i class="sep"></i><span>修改纵筋</span><span>修改箍筋</span><span>编辑弯钩</span><span>端头伸缩</span><span class="off">删除</span>
    </div>
    <div class="dlg-bar2">
      <span class="off-d">钢筋信息</span>
      <div class="rebarinfo">C8@125<i class="caret"></i></div>
    </div>
    <div class="canvas">
      <svg class="cad" viewBox="669 211 697 439">
        <g class="grid-l">
          <path d="M847 279H1222M847 317H1222M847 352H1222M847 389H1222M847 426H1222M847 463H1222M847 498H1222M847 535H1222M847 571H1222M847 608H1222M847 644H1222"/>
          <path d="M852 273V650M887 273V650M924 273V650M961 273V650M997 273V650M1033 273V650M1070 273V650M1107 273V650M1143 273V650M1180 273V650M1217 273V650"/>
        </g>
        <g class="cad-g">
          <text x="1028" y="288">500</text>
          <text x="843" y="470">-500</text>
          <text x="1212" y="470">500</text>
          <text x="1034" y="470">0</text>
          <text x="1025" y="652">-500</text>
        </g>
        <rect class="outline" x="970" y="316" width="127" height="292"/>
        <g class="hoop">
          <rect x="979" y="325" width="108" height="135" rx="5"/>
          <path d="M1033 325H1038V455Q1038 460 1033 460M981 388H1087"/>
          <path d="M982 332L1011 364M987 327L1018 357M1031 328L1000 357M981 397L1011 427M1000 428L1028 458M1087 397L1057 427"/>
          <path d="M1011 467L981 498Q978 505 985 505.500H1082Q1090 505 1087 498L1057 467"/>
          <path d="M1011 513L981 544Q978 551 985 551.500H1082Q1090 551 1087 544L1057 513"/>
          <path d="M1011 560L981 591Q978 598 985 598.500H1082Q1090 598 1087 591L1057 560"/>
        </g>
        <g class="dots">
          <circle class="dy" cx="983" cy="329" r="2"/><circle class="dm" cx="1033" cy="329" r="2"/><circle class="dy" cx="1083" cy="329" r="2"/>
          <circle class="dm" cx="983" cy="392" r="2"/><circle class="dm" cx="1083" cy="392" r="2"/>
          <circle class="dc" cx="983" cy="455" r="2"/><circle class="dm" cx="1033" cy="455" r="2"/><circle class="dc" cx="1083" cy="455" r="2"/>
          <circle class="dm" cx="983" cy="501" r="2"/><circle class="dm" cx="1083" cy="501" r="2"/>
          <circle class="dm" cx="983" cy="548" r="2"/><circle class="dm" cx="1083" cy="548" r="2"/>
          <circle class="dy" cx="983" cy="594" r="2"/><circle class="dy" cx="1083" cy="594" r="2"/>
        </g>
        <path class="lead" d="M1097 316L1136 278"/>
        <g class="cad-w">
          <text x="1137" y="254">角筋</text>
          <text x="1137" y="268">箍筋</text>
          <text x="1137" y="283">其它纵筋</text>
        </g>
        <g class="cad-lg">
          <text x="1202" y="254">2C10+2C16</text>
          <text x="1202" y="268">C10@90</text>
          <text x="1202" y="283">2C16</text>
          <text x="1017" y="312">1C14</text>
        </g>
        <g class="dim">
          <path d="M1112 314V612M1101 317H1123M1101 463H1123M1101 608H1123M1104 308L1119 323M1104 454L1119 469M1104 600L1119 614"/>
          <path d="M965 622H1106M970 611V632M1033 611V632M1097 611V632M963 630L978 615M1027 630L1042 615M1091 630L1106 615"/>
        </g>
        <g class="cad-t">
          <text class="t400" x="1116" y="395">400</text>
          <text class="t400" x="1116" y="541">400</text>
          <text x="990" y="643">175</text>
          <text x="1053" y="643">175</text>
        </g>
      </svg>
    </div>
    <div class="dlg-status">
      <div class="coord">(X: 216 Y: 691)</div>
      <div class="coord-rest"></div>
    </div>
  </div>
</div>
</body>
</html>
```

FILE: styles.css
```css
* { box-sizing: border-box; }
html, body { margin: 0; padding: 0; }
body {
  width: 1366px;
  height: 768px;
  overflow: hidden;
  position: relative;
  display: flex;
  flex-direction: column;
  background: #f0f0f0;
  color: #111;
  font: 12px/16px "Noto Sans CJK SC", "Liberation Sans", sans-serif;
}
.defs { position: absolute; }
i { font-style: normal; }
.m { font: 10px/16px "DejaVu Sans Mono", monospace; }
.n { font: 11px/16px "Liberation Sans", sans-serif; }

/* title bar */
.titlebar { height: 23px; background: #fff; display: flex; align-items: center; padding-left: 2px; flex: none; }
.appicon { width: 16px; height: 16px; margin-right: 4px; }
.title-text { font-size: 12.630px; white-space: nowrap; color: #222; }
.winbtns { margin-left: auto; display: flex; }
.wb { width: 46px; height: 23px; }

/* menu */
.menubar { height: 29px; flex: none; display: flex; align-items: center; gap: 10px; padding-left: 7px; background: linear-gradient(#f6f6f6, #efefef); white-space: nowrap; }
.mi16 { width: 16px; height: 16px; flex: none; }
.tight-l { margin-left: -6px; }
.mm1 { margin-left: -1px; }
.mm2 { margin-left: -2px; }
.mm3 { margin-left: -3px; }
.mp1 { margin-left: 1px; }
.mp2 { margin-left: 2px; }
.mp3 { margin-left: 3px; }
.mp4 { margin-left: 4px; }
.mc { margin-left: -4px; }
.phone { letter-spacing: .35px; }
.caret { display: block; width: 0; height: 0; border: 3px solid transparent; border-top: 3px solid #333; border-bottom: 0; width: 6px; flex: none; }
.ask { width: 182px; height: 27px; background: #f8f8f8; color: #3d7000; padding-left: 27px; line-height: 27px; margin: 0 0 0 -2px; }
.bell { width: 14px; height: 16px; margin-left: -1px; }
.more { font: bold 11px/12px "Liberation Sans", sans-serif; width: 10px; flex: none; position: relative; top: -4px; }
.endmore { margin-left: auto; margin-right: 4px; }

/* toolbars */
.toolbar { height: 32px; flex: none; display: flex; align-items: center; gap: 7px; padding: 0 0 2px 4px; background: linear-gradient(#fafafa, #ececec); white-space: nowrap; }
.toolbar2 { height: 28px; flex: none; display: flex; align-items: center; gap: 7px; padding: 0 0 1px 7px; background: linear-gradient(#fafafa, #ececec); white-space: nowrap; }
.t { display: flex; align-items: center; gap: 4px; flex: none; }
.off { color: #9c9c9c; }
.ic { width: 16px; height: 16px; flex: none; }
.ic14 { width: 14px; height: 16px; flex: none; }
.ic12 { width: 12px; height: 16px; flex: none; }
.sep { display: block; width: 1px; height: 22px; background: #b5b5b5; flex: none; }
.tl { margin-left: -1px; }
.sig { width: 16px; text-align: center; font: bold 14px/16px "Liberation Serif", serif; }
.after-undo { margin-left: 9px; }
.after-more { margin-left: 2px; }
.after-batch { margin-left: 31px; }
.combo2d { width: 62px; height: 23px; border: 1px solid #666; display: flex; align-items: center; padding-left: 2px; background: #f3f3f3; position: relative; flex: none; }
.sq { width: 15px; height: 14px; background: #ddd; border: 1px solid #bbb; margin-right: 3px; }
.cr { margin-left: 10px; }
.pull { margin-left: -4px; }
.tl2 { margin-left: -2px; }
.tc { margin-left: -7px; }
.nogap { gap: 1px; }
.c2 { margin-left: -4px; }
.x8 { margin-left: 1px; }
.lab { margin-left: -5px; }
.lab1 { margin-left: -4px; }
.lab2 { margin-left: -3px; }
.floor { width: 60px; height: 26px; background: #fff; display: flex; align-items: center; padding-left: 2px; margin-left: -1px; }
.floor .caret { margin-left: 14px; }
.g6 { gap: 6px; }
.g5 { gap: 5px; }
.x3 { margin-left: 2px; }

/* workspace */
.workspace { flex: 1; display: flex; min-height: 0; }
.nav { width: 168px; flex: none; display: flex; flex-direction: column; }
.nav-head { height: 16px; width: 166px; background: #0a5fe0; color: #fff; display: flex; letter-spacing: .2px; line-height: 15px; position: relative; }
.pin { position: absolute; left: 134px; top: 2px; width: 10px; height: 12px; }
.xx { position: absolute; left: 153px; top: 3px; width: 9px; height: 9px; }
.nav-btn { height: 22px; width: 164px; margin-left: 2px; border: 1px solid #a8a8a8; background: #f0f0f0; text-align: center; line-height: 21px; }
.nav-tools { height: 25px; margin: 3px 3px 0 2px; background: linear-gradient(#fafafa, #ececec); display: flex; align-items: center; padding-left: 2px; gap: 5px; }
.pm { width: 20px; height: 16px; }
.nav-box { height: 488px; width: 162px; margin-left: 3px; border: 2px solid #a0a0a0; background: #fff; display: flex; flex-direction: column; }
.nav-upper { flex: 1; display: flex; min-height: 0; }
.nav-list { width: 142px; height: 468px; overflow: hidden; position: relative; white-space: nowrap; background: #fff; }
.nav-list::before { content: ""; position: absolute; left: 11px; top: 0; bottom: 0; border-left: 1px dotted #777; }
.ni, .nf { height: 16px; line-height: 16px; position: relative; }
.ni { padding-left: 42px; display: block; }
.nf { display: flex; align-items: center; }
.ni::before { content: ""; position: absolute; left: 30px; top: 0; bottom: 0; border-left: 1px dotted #777; }
.ni.last::before { bottom: 8px; }
.ni::after { content: ""; position: absolute; left: 31px; width: 11px; top: 8px; border-top: 1px dotted #777; }
.i15 { width: 15px; height: 15px; margin-right: 5px; display: inline-block; vertical-align: top; position: relative; z-index: 1; }
.selb { display: inline-block; height: 16px; background: #d6d6d6; padding: 0 5px 0 3px; margin-left: -3px; vertical-align: top; position: relative; z-index: 1; }
.nf { padding-left: 22px; }
.nf::after { content: ""; position: absolute; left: 16px; width: 6px; top: 8px; border-top: 1px dotted #777; }
.chev { position: absolute; left: 5px; top: 4px; width: 10px; height: 8px; background: #fff; z-index: 1; }
.chev-side { position: absolute; left: 7px; top: 3px; width: 8px; height: 10px; background: #fff; z-index: 1; }
.fold { width: 16px; height: 14px; margin-right: 5px; flex: none; }
.vbar { width: 16px; background: #f0f0f0; display: flex; flex-direction: column; align-items: center; position: relative; flex: none; }
.arr { width: 10px; height: 8px; margin-top: 4px; flex: none; }
.arr-end { position: absolute; bottom: 4px; margin: 0; }
.thumb { background: #c8c8c8; width: 16px; position: absolute; }
.nav-v .thumb { top: 102px; height: 246px; }
.tree-v .thumb { top: 154px; height: 387px; }
.hbar { height: 16px; flex: none; background: #f0f0f0; display: flex; align-items: center; position: relative; }
.harr { width: 8px; height: 10px; margin-left: 5px; }
.harr-end { margin-left: auto; margin-right: 23px; }
.hthumb { position: absolute; left: 17px; width: 102px; height: 16px; background: #c8c8c8; }

/* right */
.right { flex: 1; display: flex; flex-direction: column; min-width: 0; }
.panes { flex: 1; display: flex; min-height: 0; }
.tree-pane { width: 183px; margin-left: 4px; flex: none; padding-top: 5px; }
.search-row { display: flex; align-items: center; height: 24px; }
.search-input { width: 157px; height: 24px; background: #fff; border: 1px solid #8c8c8c; padding-left: 3px; line-height: 22px; color: #888; }
.search-ic { width: 16px; height: 16px; margin-left: 4px; }
.tree-box { margin-top: 1px; height: 564px; border: 2px solid #a0a0a0; background: #fff; display: flex; }
.tree-list { width: 162px; overflow: hidden; padding-top: 1px; font: 10px/16px "DejaVu Sans Mono", monospace; }
.tr { height: 16px; position: relative; padding-left: 61px; display: flex; align-items: center; white-space: nowrap; }
.tr::before { content: ""; position: absolute; left: 29px; top: 0; bottom: 0; border-left: 1px dotted #777; }
.tr.last::before { bottom: 8px; }
.tr::after { content: ""; position: absolute; left: 30px; width: 12px; top: 8px; border-top: 1px dotted #777; }
.gear { position: absolute; left: 41px; top: 2px; width: 12px; height: 12px; z-index: 1; }
.cur::before { z-index: 0; }
.cur { background: linear-gradient(to right, transparent 38px, #cce8ff 38px, #cce8ff 94px, transparent 94px); }
.curtext { background: #2a70d0; color: #111; height: 16px; line-height: 16px; margin-left: -2px; padding: 0 2px; flex: none; white-space: nowrap; }

/* properties */
.props-pane { flex: 1; margin-left: 7px; min-width: 0; }
.tabbar { height: 24px; position: relative; }
.tab { width: 63px; height: 20px; margin-left: -4px; background: #fff; border: 1px solid #d0d0d0; border-bottom: 0; text-align: center; line-height: 18px; }
.grid { height: 566px; border: 2px solid #b5b5b5; border-right: 0; background: #fff; overflow: hidden; }
.row { display: flex; height: 19px; border-bottom: 1px solid #c4c4c4; width: 338px; white-space: nowrap; }
.row.head { height: 23px; }
.num { width: 21px; flex: none; background: linear-gradient(#fff, #ececec); border-right: 1px solid #c4c4c4; text-align: center; font: 10.500px/18px "Liberation Serif", serif; }
.nm { width: 191px; flex: none; border-right: 1px solid #c4c4c4; padding-left: 20px; line-height: 18px; position: relative; }
.head .nm { text-align: center; padding-left: 0; line-height: 22px; background: linear-gradient(#fff, #efefef); }
.val { flex: 1; padding-left: 2px; line-height: 18px; overflow: hidden; }
.head .val { background: linear-gradient(#fbdf9f, #f4bf5f); color: #5a0090; text-align: center; line-height: 22px; padding-left: 0; }
.val .m, .val .n { line-height: 18px; }
.sel .num { background: #ffd795; color: #5a0090; }
.sel .nm { background: #0078d7; color: #fff; }
.sel .val { background: #d6e8f8; }
.blue { color: #0000e6; }
.gray { color: #8a8a8a; }
.rebar { font: 10px/16px "DejaVu Sans", sans-serif; margin: 0 1px; }
.grp { padding-left: 20px; }
.bx { position: absolute; left: 2px; top: 3px; width: 12px; height: 12px; border: 1px solid #b0b0b0; color: #222; text-align: center; font: 12px/10px "Liberation Sans", sans-serif; background: #fff; }
.sub { padding-left: 30px; }
.sub::before { content: ""; position: absolute; left: 8px; top: -1px; height: 19px; border-left: 1px solid #b5b5b5; }
.sub.end::before { height: 10px; }
.sub::after { content: ""; position: absolute; left: 8px; top: 8px; width: 17px; border-top: 1px solid #b5b5b5; }

/* status bar */
.statusbar { height: 20px; flex: none; display: flex; gap: 2px; background: #f0f0f0; }
.sc { height: 20px; border: 1px solid #d8d8d8; background: #f4f4f4; padding-left: 1px; line-height: 19px; white-space: nowrap; }
.s1 { width: 148px; }
.s2 { width: 78px; }
.s3 { width: 98px; }
.s4 { width: 48px; }
.s5 { width: 914px; }
.s6 { flex: 1; }

/* taskbar */
.taskbar { height: 40px; flex: none; background: #050b10; display: flex; align-items: center; color: #fff; }
.start { width: 48px; height: 40px; background: #000; display: flex; align-items: center; justify-content: center; }
.winlogo { width: 16px; height: 16px; }
.tsearch { width: 344px; height: 40px; background: #333; display: flex; align-items: center; color: #8f8f8f; font-size: 14px; position: relative; padding-left: 9px; }
.cortana { width: 20px; height: 20px; margin-right: 7px; }
.mic { width: 12px; height: 20px; position: absolute; left: 318px; top: 10px; }
.tk { width: 45px; height: 40px; display: flex; align-items: center; justify-content: center; position: relative; flex: none; }
.tki { width: 24px; height: 24px; }
.tk6 { margin-left: 6px; }
.tk5 { margin-left: 5px; }
.tk14 { margin-left: 14px; }
.tk-sep { width: 1px; height: 16px; background: #444; margin-left: 11px; flex: none; }
.run::after { content: ""; position: absolute; left: 5px; right: 5px; bottom: 0; height: 2px; background: #5aa9ea; }
.active { background: #2e3a40; }
.active::after { left: 0; right: 0; }
.appbig { border-radius: 4px; }
.cpu { width: 52px; margin-left: 20px; display: flex; flex-direction: column; align-items: center; line-height: 18px; white-space: nowrap; }
.tray-up { width: 12px; height: 8px; margin-left: 18px; }
.tray-bat { width: 18px; height: 16px; margin-left: 10px; }
.tray-wifi { width: 14px; height: 14px; margin-left: 10px; }
.tray-vol { width: 16px; height: 14px; margin-left: 7px; }
.tray-kbd { width: 22px; height: 14px; margin-left: 8px; }
.tray-cn { font-size: 14px; font-weight: bold; margin-left: 11px; }
.tray-s { width: 15px; height: 17px; margin-left: 13px; background: #e8481c; color: #fff; text-align: center; border-radius: 4px; font: bold 14px/17px "Liberation Sans", sans-serif; flex: none; }
.clock { width: 70px; margin-left: 11px; display: flex; flex-direction: column; align-items: center; line-height: 18px; white-space: nowrap; }
.notif { position: relative; margin-left: 13px; width: 26px; height: 30px; }
.notif-ic { position: absolute; left: 0; top: 5px; width: 17px; height: 17px; }
.badge { position: absolute; left: 8px; top: 12px; width: 17px; height: 17px; border-radius: 50%; background: #333; border: 1px solid #999; text-align: center; font: bold 11px/15px "Liberation Sans", sans-serif; }

/* overlays */
.sogou { position: absolute; left: 813px; top: 0; display: flex; align-items: center; height: 27px; }
.s-logo { width: 25px; height: 26px; background: #ef5a1e; color: #fff; text-align: center; border-radius: 5px; font: bold 22px/26px "Liberation Sans", sans-serif; z-index: 1; }
.s-bar { width: 159px; height: 23px; margin-top: -4px; background: #fbfdff; border: 1px solid #a9c4de; display: flex; align-items: center; padding-left: 7px; gap: 6px; }
.s-cn { color: #2a7fc8; font-size: 14px; margin-right: 2px; }
.s-p { color: #2a7fc8; width: 14px; font-size: 11px; }
.s-i { width: 15px; height: 15px; flex: none; }
.badge76 { position: absolute; left: 1139px; top: -30px; width: 48px; height: 48px; border-radius: 50%; background: linear-gradient(#2fa63c, #58bd60); border: 2px solid #bbb; color: #fff; font: bold 12px/68px "Liberation Sans", sans-serif; text-align: center; }

/* section dialog */
.dialog { position: absolute; left: 654px; top: 115px; width: 712px; height: 571px; border: 1px solid #555; border-right: 0; background: #d8e4f0; display: flex; flex-direction: column; }
.dlg-title { height: 31px; padding: 10px 0 0 8px; color: #9a9a9a; background: linear-gradient(#b9c9d9, #dbe6f2); line-height: 16px; flex: none; }
.dlg-body { margin-left: 8px; background: #f0f0f0; flex: none; padding-top: 5px; height: 533px; }
.dlg-bar1 { height: 26px; display: flex; align-items: center; gap: 10px; padding-left: 16px; background: linear-gradient(#fff, #eee); white-space: nowrap; }
.dlg-bar1 .sep { margin: 0 -2.500px; height: 20px; }
.dlg-bar2 { height: 31px; display: flex; align-items: center; padding-left: 15px; position: relative; }
.off-d { color: #888; }
.rebarinfo { width: 132px; height: 23px; margin-left: 3px; border: 1px solid #666; display: flex; align-items: center; padding-left: 1px; color: #8a8a8a; background: #f3f3f3; font: 12px/16px "Liberation Sans", sans-serif; }
.rebarinfo .caret { margin-left: auto; margin-right: 4px; }
.canvas { height: 443px; margin-left: 4px; border: 2px solid #f00; border-right: 0; background: #000; }
.cad { width: 697px; height: 439px; display: block; shape-rendering: crispEdges; }
.grid-l { stroke: #505050; fill: none; stroke-dasharray: 9 3 2 3; }
.cad-g { fill: #555; font: 10px "DejaVu Sans Mono", monospace; }
.outline { fill: none; stroke: #fff; stroke-width: 2; }
.hoop { fill: none; stroke: #f00; stroke-width: 4.500; stroke-linecap: butt; }
.dots { shape-rendering: auto; }
.dy { fill: #ff0; stroke: #c07000; }
.dm { fill: #f0f; stroke: #a000a0; }
.dc { fill: #0ff; stroke: #088; }
.lead { stroke: #fff; fill: none; }
.cad-w { fill: #fff; font: 14px "Noto Sans CJK SC", sans-serif; }
.cad-lg { fill: #0f0; font: 13.300px "Liberation Mono", monospace; }
.dim { stroke: #0f0; fill: none; }
.cad-t { fill: #fff; font: 13.300px "Liberation Mono", monospace; }
.cad-t .t400 { font-size: 12.500px; }
.dlg-status { height: 28px; padding-top: 5px; display: flex; gap: 2px; background: linear-gradient(#fff, #eee); }
.coord { width: 147px; height: 23px; border: 1px solid #ddd; padding-left: 8px; font: 10px/21px "DejaVu Sans Mono", monospace; }
.coord-rest { flex: 1; height: 23px; border: 1px solid #ddd; }
```
